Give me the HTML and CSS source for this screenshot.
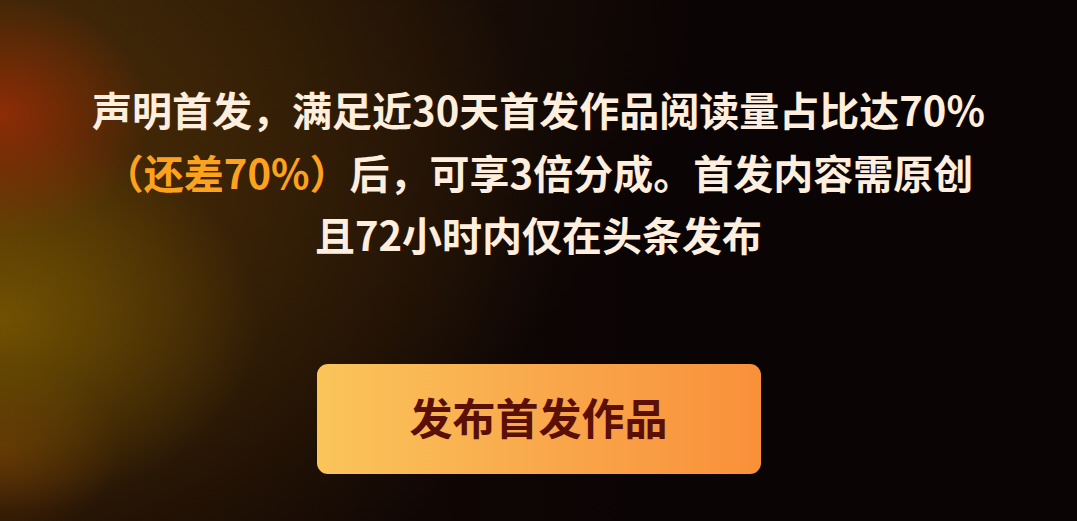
FILE: index.html
```html
<!DOCTYPE html>
<html lang="zh-CN">
<head>
<meta charset="utf-8">
<link rel="stylesheet" href="styles.css">
</head>
<body>
<main class="panel">
  <p class="desc">声明首发，满足近30天首发作品阅读量占比达70%<br><span class="hl">（还差70%）</span>后，可享3倍分成。首发内容需原创<br>且72小时内仅在头条发布</p>
  <button class="cta">发布首发作品</button>
</main>
</body>
</html>
```
FILE: styles.css
```css
html, body {
  margin: 0;
  padding: 0;
  width: 1077px;
  height: 521px;
  overflow: hidden;
}
body {
  background-color: #0b0404;
  background-image:
    radial-gradient(ellipse 150px 120px at 0px 115px, rgba(160, 45, 5, 0.8), rgba(160, 45, 5, 0) 100%),
    radial-gradient(ellipse 260px 190px at 0px 320px, rgba(125, 92, 0, 0.8), rgba(125, 92, 0, 0) 100%),
    radial-gradient(ellipse 120px 90px at 0px 450px, rgba(120, 60, 5, 0.6), rgba(120, 60, 5, 0) 100%),
    radial-gradient(ellipse 560px 440px at 0px 220px, rgba(90, 55, 5, 0.7), rgba(90, 55, 5, 0) 100%),
    radial-gradient(ellipse 700px 520px at 0px 0px, rgba(60, 38, 10, 0.7), rgba(60, 38, 10, 0) 100%),
    linear-gradient(90deg, #1a0c04 0%, #0b0404 60%);
  font-family: "Noto Sans CJK SC", "Noto Sans", sans-serif;
}
.panel {
  display: flex;
  flex-direction: column;
  align-items: center;
  padding-top: 78px;
}
.desc {
  margin: 0;
  text-align: center;
  font-size: 40px;
  line-height: 62.5px;
  font-weight: 600;
  color: #fdeedd;
  white-space: nowrap;
}
.hl {
  color: #fda21c;
}
.cta {
  margin-top: 98px;
  width: 444px;
  height: 110px;
  border: none;
  border-radius: 11px;
  background: linear-gradient(90deg, #fac55a 0%, #f9a64a 55%, #f9903a 100%);
  color: #5a0f07;
  font-family: "Noto Sans CJK SC", "Noto Sans", sans-serif;
  font-size: 43px;
  font-weight: 700;
  padding: 0 0 6px 0;
  cursor: pointer;
}
```
